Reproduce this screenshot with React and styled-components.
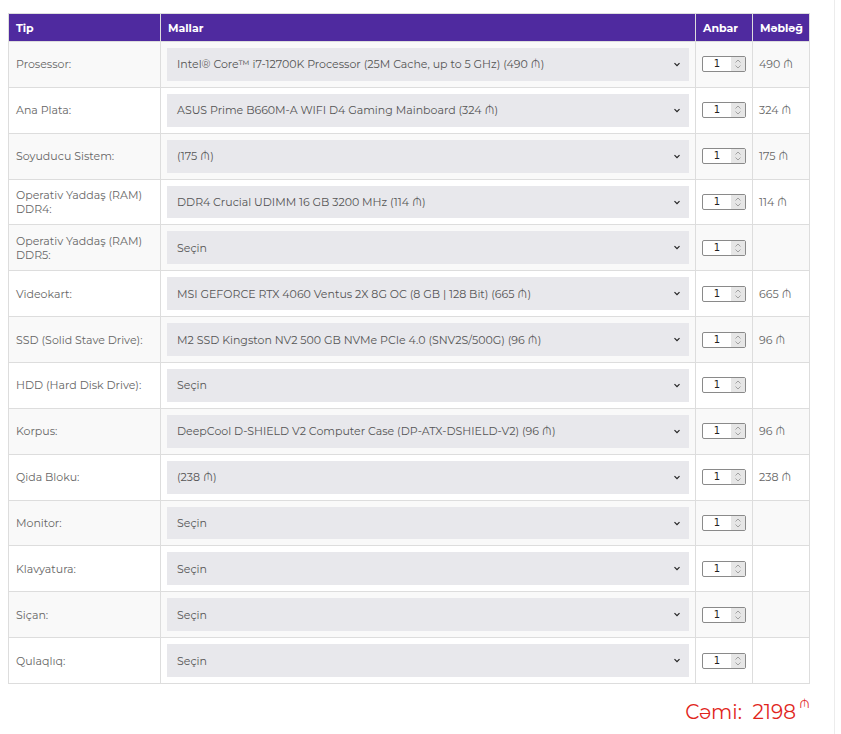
import React from "react";
import styled, { createGlobalStyle } from "styled-components";

const Global = createGlobalStyle`
  html, body { margin: 0; padding: 0; background: #fff; }
  body { font-family: "Montserrat", "Noto Sans", "Open Sans", sans-serif; }
`;

const Page = styled.div`
  box-sizing: border-box;
  width: 835px;
  min-height: 734px;
  border-right: 1px solid #ececec;
  padding: 13px 0 0 8px;
`;

const Table = styled.table`
  border-collapse: collapse;
  width: 802px;
  table-layout: fixed;
  font-size: 11px;
  color: #666;
`;

const Th = styled.th`
  background: #4f2a9f;
  color: #fff;
  font-weight: 700;
  text-align: left;
  height: 27px;
  padding: 0 7px;
  border: 1px solid #ddd;
  font-size: 11px;
`;

const Row = styled.tr`
  background: ${(p) => (p.$odd ? "#f9f9f9" : "#fff")};
`;

const Td = styled.td`
  border: 1px solid #ddd;
  padding: 6px 6px;
  height: 32.86px;
  vertical-align: middle;
  line-height: 14px;
  padding-left: ${(p) => p.$pl || 6}px;
`;

const Select = styled.div`
  box-sizing: border-box;
  height: 32.86px;
  background: #e8e8ec;
  display: flex;
  align-items: center;
  justify-content: space-between;
  padding: 0 8px 0 10px;
  color: #555;
  white-space: nowrap;
  overflow: hidden;
`;

const Qty = styled.div`
  box-sizing: border-box;
  width: 44px;
  height: 16px;
  border: 1px solid #8a8a8a;
  border-radius: 2px;
  display: flex;
  background: #fff;
`;

const QtyVal = styled.span`
  flex: 1;
  text-align: center;
  font-size: 10px;
  line-height: 14px;
  color: #222;
  font-family: "DejaVu Sans", sans-serif;
`;

const Spin = styled.span`
  width: 14px;
  background: #e6e6e6;
  display: flex;
  align-items: center;
  justify-content: center;
`;

const Total = styled.div`
  width: 802px;
  display: flex;
  justify-content: flex-end;
  align-items: flex-start;
  margin-top: 16px;
  color: #e1251b;
  font-size: 20px;
`;

const Cur = styled.span`
  font-size: 12px;
  margin-left: 3px;
  margin-top: -4px;
`;

const rows = [
  ["Prosessor:", "Intel® Core™ i7-12700K Processor (25M Cache, up to 5 GHz) (490 ₼)", "490 ₼"],
  ["Ana Plata:", "ASUS Prime B660M-A WIFI D4 Gaming Mainboard (324 ₼)", "324 ₼"],
  ["Soyuducu Sistem:", "(175 ₼)", "175 ₼"],
  ["Operativ Yaddaş (RAM) DDR4:", "DDR4 Crucial UDIMM 16 GB 3200 MHz (114 ₼)", "114 ₼"],
  ["Operativ Yaddaş (RAM) DDR5:", "Seçin", ""],
  ["Videokart:", "MSI GEFORCE RTX 4060 Ventus 2X 8G OC (8 GB | 128 Bit) (665 ₼)", "665 ₼"],
  ["SSD (Solid Stave Drive):", "M2 SSD Kingston NV2 500 GB NVMe PCIe 4.0 (SNV2S/500G) (96 ₼)", "96 ₼"],
  ["HDD (Hard Disk Drive):", "Seçin", ""],
  ["Korpus:", "DeepCool D-SHIELD V2 Computer Case (DP-ATX-DSHIELD-V2) (96 ₼)", "96 ₼"],
  ["Qida Bloku:", "(238 ₼)", "238 ₼"],
  ["Monitor:", "Seçin", ""],
  ["Klavyatura:", "Seçin", ""],
  ["Siçan:", "Seçin", ""],
  ["Qulaqlıq:", "Seçin", ""],
];

const Chevron = () => (
  <svg width="8" height="5" viewBox="0 0 8 5">
    <path d="M1.5 1.2l2.5 2.5 2.5-2.5" fill="none" stroke="#222" strokeWidth="1.2" />
  </svg>
);

const SpinIcon = () => (
  <svg width="8" height="12" viewBox="0 0 8 12">
    <path d="M1.5 4.5L4 2l2.5 2.5M1.5 7.5L4 10l2.5-2.5" fill="none" stroke="#999" strokeWidth="0.9" />
  </svg>
);

export default function App() {
  return (
    <Page>
      <Global />
      <Table>
        <colgroup>
          <col style={{ width: 152 }} />
          <col style={{ width: 535 }} />
          <col style={{ width: 57 }} />
          <col style={{ width: 57 }} />
        </colgroup>
        <thead>
          <tr>
            <Th>Tip</Th>
            <Th>Mallar</Th>
            <Th>Anbar</Th>
            <Th>Məbləğ</Th>
          </tr>
        </thead>
        <tbody>
          {rows.map((r, i) => (
            <Row key={i} $odd={i % 2 === 0}>
              <Td $pl={7}>{r[0]}</Td>
              <Td>
                <Select>
                  <span>{r[1]}</span>
                  <Chevron />
                </Select>
              </Td>
              <Td>
                <Qty>
                  <QtyVal>1</QtyVal>
                  <Spin>
                    <SpinIcon />
                  </Spin>
                </Qty>
              </Td>
              <Td>{r[2]}</Td>
            </Row>
          ))}
        </tbody>
      </Table>
      <Total>
        <span>Cəmi:&nbsp; 2198</span>
        <Cur>₼</Cur>
      </Total>
    </Page>
  );
}
